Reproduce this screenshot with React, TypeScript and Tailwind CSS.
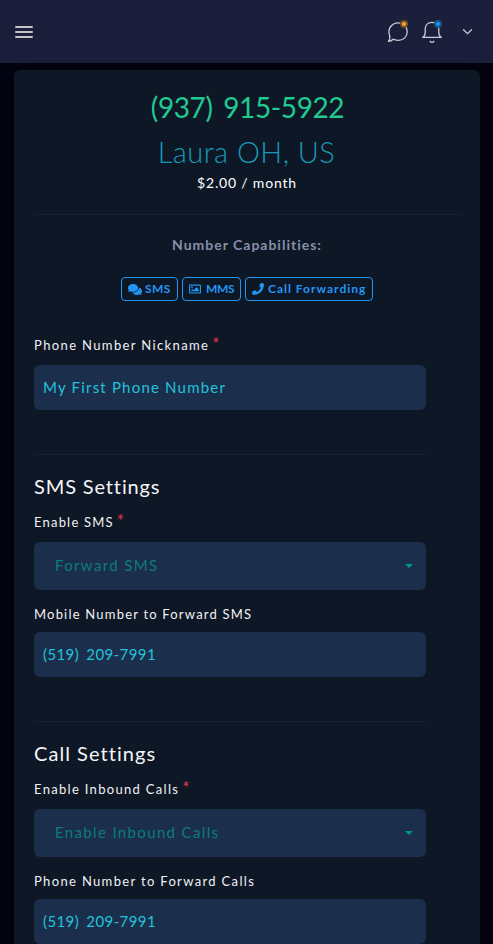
import type { ReactNode } from "react";
import { FaComments, FaPhone, FaRegImage } from "react-icons/fa";

function Header() {
  return (
    <header className="flex h-[63px] items-center bg-[#1b1f3b] text-[#c9cace]">
      <button className="ml-[15px] flex w-[18px] flex-col gap-[3px] pt-px" aria-label="Menu">
        <span className="h-[2px] w-full rounded-[1px] bg-[#c4c5ca]" />
        <span className="h-[2px] w-full rounded-[1px] bg-[#c4c5ca]" />
        <span className="h-[2px] w-full rounded-[1px] bg-[#c4c5ca]" />
      </button>
      <button className="relative ml-auto h-[24px] w-[24px]" aria-label="Messages">
        <svg className="size-6" viewBox="0 0 24 24" fill="none" stroke="currentColor" strokeWidth="1.3" strokeLinejoin="round">
          <path d="M2.5 21.3C3.9 19.7 4.1 17.6 3.6 15.5C2.5 12.4 2.8 9 4.7 6.5C6.8 3.8 9.4 2.9 12.2 2.9C17.6 2.9 21.2 6.6 21.2 11.6C21.2 16.7 17.5 20.4 12.5 20.4C10.2 20.4 8.8 19.8 7.2 19.2C5.8 20.6 4.3 21.2 2.5 21.3Z" />
        </svg>
        <span className="absolute top-0 right-[2px] size-[8px] rounded-full border-2 border-[#765026] bg-[#f9a93a]" />
      </button>
      <button className="relative ml-[10px] h-[24px] w-[24px]" aria-label="Notifications">
        <svg className="size-6" viewBox="0 0 24 24" fill="none" stroke="currentColor" strokeWidth="1.3" strokeLinecap="round" strokeLinejoin="round">
          <path d="M2.8 17.4H21.2C19.3 16.5 18.8 14.8 18.8 12.2V9C18.8 4.9 16 2.3 12 2.3S5.2 4.9 5.2 9V12.2C5.2 14.8 4.7 16.5 2.8 17.4Z" />
          <path d="M10.2 21.3C11 22.6 13 22.6 13.8 21.3" />
        </svg>
        <span className="absolute top-0 right-[2px] size-[8px] rounded-full border-2 border-[#17568f] bg-[#2196f3]" />
      </button>
      <svg className="mr-[20px] ml-[18px] h-[12px] w-[11px]" viewBox="0 0 11 12" fill="none" stroke="currentColor" strokeWidth="1.3" strokeLinecap="round">
        <path d="M1.5 3.7L5.5 7.7L9.5 3.7" />
      </svg>
    </header>
  );
}

function Badge({ icon, className, children }: { icon: ReactNode; className: string; children: ReactNode }) {
  return (
    <span className={`flex h-[24px] items-center rounded-[4px] border border-[#2196f3] pl-[6px] text-[12px] font-bold whitespace-nowrap text-[#2196f3] ${className}`}>
      {icon}
      {children}
    </span>
  );
}

function Label({ required, className, children }: { required?: boolean; className: string; children: ReactNode }) {
  return (
    <div className="flex h-[20px] items-center text-[13px] leading-5 whitespace-nowrap text-[#f1f1f3]">
      <span className={className}>{children}</span>
      {required && <span className="relative -top-px ml-[3px] text-[17px] text-[#e7394a]">*</span>}
    </div>
  );
}

function Input({ className, children }: { className: string; children: ReactNode }) {
  return (
    <div className={`flex h-[45px] items-center rounded-[6px] bg-[#1b2e4b] pl-[9px] text-[15px] text-[#22c3dc] ${className}`}>
      {children}
    </div>
  );
}

function Select({ children }: { children: ReactNode }) {
  return (
    <div className="mt-[10px] mb-[14px] flex h-[48px] items-center justify-between rounded-[6px] bg-[#1b2e4b] pr-[13px] pl-[21px] text-[15px] tracking-[1.35px] text-[#0c7c7b]">
      <span className="pb-[2px]">{children}</span>
      <span className="h-0 w-0 border-x-4 border-t-4 border-x-transparent border-t-[#009688]" />
    </div>
  );
}

function Section({ title, titleClass, children }: { title: string; titleClass: string; children: ReactNode }) {
  return (
    <section className="mt-[44px] border-t border-[#191e3a] pt-[16px]">
      <h2 className={`mb-[11px] h-[30px] text-[20px] leading-[30px] text-[#f5f5f7] ${titleClass}`}>{title}</h2>
      {children}
    </section>
  );
}

export default function App() {
  return (
    <div className="h-[944px] w-[493px] overflow-hidden bg-[#030312] font-['Lato',sans-serif]">
      <Header />
      <main className="mt-[7px] mr-[13px] ml-[14px] h-[900px] rounded-t-[6px] bg-[#0e1726] px-[20px] pt-[17px] shadow-[0_0_14px_rgba(0,0,0,0.5)]">
        <div className="mr-[-1px] text-center">
          <h1 className="h-[40px] text-[28px] leading-[40px] tracking-[-0.4px] text-[#1fcb91] [word-spacing:4px]">(937) 915-5922</h1>
          <p className="mt-[3px] mr-[2px] h-[44px] text-[29px] leading-[44px] font-light tracking-[0.45px] text-[#1799b5]">Laura OH, US</p>
          <p className="mr-px h-[18px] text-[14px] leading-[18px] tracking-[0.81px] text-white">$2.00 / month</p>
          <div className="mt-[22px] border-t border-[#191e3a]" />
          <p className="mt-[20px] mr-px h-[20px] text-[14px] leading-[20px] font-bold tracking-[0.99px] text-[#888ea8]">Number Capabilities:</p>
        </div>
        <div className="mt-[22px] ml-[87px] flex gap-[4px]">
          <Badge className="w-[57px] tracking-[0.4px]" icon={<FaComments className="mr-[3px] h-[13px] w-[14px]" />}>SMS</Badge>
          <Badge className="w-[59px] tracking-[-0.3px]" icon={<FaRegImage className="mr-[5px] size-[12px]" />}>MMS</Badge>
          <Badge className="w-[128px] tracking-[0.99px]" icon={<FaPhone className="mr-[4px] size-[12px]" />}>Call Forwarding</Badge>
        </div>
        <div className="mt-[34px] w-[392px]">
          <Label required className="tracking-[1.37px]">Phone Number Nickname</Label>
          <Input className="mt-[10px] tracking-[1.2px]">My First Phone Number</Input>
          <Section title="SMS Settings" titleClass="tracking-[0.86px]">
            <Label required className="tracking-[1.2px]">Enable SMS</Label>
            <Select>Forward SMS</Select>
            <Label className="tracking-[1.2px]">Mobile Number to Forward SMS</Label>
            <Input className="mt-[8px] tracking-[0.4px] [word-spacing:3px]">(519) 209-7991</Input>
          </Section>
          <Section title="Call Settings" titleClass="tracking-[1.05px]">
            <Label required className="tracking-[1.31px]">Enable Inbound Calls</Label>
            <Select>Enable Inbound Calls</Select>
            <Label className="tracking-[1.34px]">Phone Number to Forward Calls</Label>
            <Input className="mt-[8px] tracking-[0.4px] [word-spacing:3px]">(519) 209-7991</Input>
          </Section>
        </div>
      </main>
    </div>
  );
}
